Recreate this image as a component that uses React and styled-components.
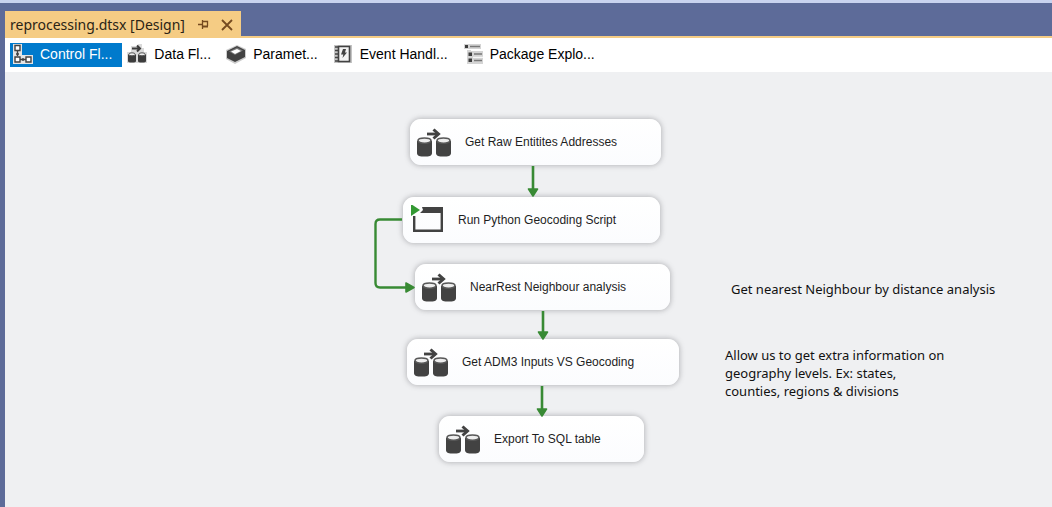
import React from "react";
import styled, { createGlobalStyle } from "styled-components";

const GlobalStyle = createGlobalStyle`
  * { box-sizing: border-box; }
  body { margin: 0; background: #eff0f2; font-family: "Liberation Sans", Arial, sans-serif; }
`;

const Window = styled.div`
  display: flex;
  flex-direction: column;
  min-height: 100vh;
  border-top: 3px solid #c9d3ef;
  background: #5d6b99;
`;

const TabStrip = styled.div`
  display: flex;
  padding: 8px 0 0 5px;
`;

const DocumentTab = styled.div`
  display: flex;
  align-items: center;
  height: 25px;
  padding: 2px 8px 0 5px;
  background: #f5cc84;
  color: #2b2415;
  font: 14px/20px "Noto Sans", "Segoe UI", sans-serif;
  white-space: nowrap;
`;

const TabTitle = styled.span`
  width: 188px;
`;

const TabButton = styled.button`
  display: flex;
  padding: 0;
  margin-right: ${(p) => p.$gap || 0}px;
  border: 0;
  background: none;
  color: #754a20;
`;

const Panel = styled.main`
  display: flex;
  flex-direction: column;
  flex: 1;
  margin-left: 5px;
  background: #eff0f2;
`;

const Toolbar = styled.nav`
  display: flex;
  align-items: center;
  gap: 2px;
  height: 36px;
  padding: 0 5px;
  border-top: 2px solid #f5cc84;
  background: #fff;
`;

const ViewButton = styled.button`
  display: flex;
  align-items: center;
  gap: 7px;
  height: 24px;
  padding: 0 10px 2px 3px;
  border: 0;
  background: ${(p) => (p.$active ? "#007acc" : "transparent")};
  color: ${(p) => (p.$active ? "#fff" : "#000")};
  font: 14px/20px "Liberation Sans", Arial, sans-serif;
  white-space: nowrap;
`;

const Canvas = styled.section`
  position: relative;
  flex: 1;
  overflow: hidden;
`;

const Connectors = styled.svg`
  position: absolute;
  left: 0;
  top: 0;
  overflow: visible;
`;

const Task = styled.div`
  position: absolute;
  left: ${(p) => p.$x}px;
  top: ${(p) => p.$y}px;
  width: ${(p) => p.$w}px;
  height: 46px;
  display: flex;
  align-items: center;
  gap: 12px;
  padding-left: 7px;
  border-radius: 11px;
  background: linear-gradient(#fff, #fbfcfe);
  box-shadow: 0 0 5px 1px rgba(90, 90, 95, 0.35);
  color: #1e1e1e;
  font-size: 12px;
  line-height: 16px;
  white-space: nowrap;
`;

const Annotation = styled.p`
  position: absolute;
  left: ${(p) => p.$x}px;
  top: ${(p) => p.$y}px;
  margin: 0;
  color: #111;
  font: 13px/18px "Noto Sans", "Segoe UI", sans-serif;
  white-space: pre-line;
`;

const PinIcon = () => (
  <svg width="11" height="9" viewBox="0 0 11 9" fill="none" stroke="currentColor" aria-hidden="true">
    <path d="M0 4.5H4M4.5 0V9M4.5 1.5H9.5V6" strokeWidth="1.3" />
    <path d="M4 6.5H10" strokeWidth="2" />
  </svg>
);

const CloseIcon = () => (
  <svg width="12" height="12" viewBox="0 0 12 12" fill="none" stroke="currentColor" strokeWidth="1.8" aria-hidden="true">
    <path d="M1 1L11 11M11 1L1 11" />
  </svg>
);

const DataFlowIcon = () => (
  <svg width="36" height="30" viewBox="0 0 36 30" aria-hidden="true">
    {[0, 19].map((x) => (
      <g key={x} transform={`translate(${x} 0)`}>
        <path d="M0 14V26C0 29 3 29.5 7.5 29.5S15 29 15 26V14Z" fill="#424242" />
        <ellipse cx="7.5" cy="13.6" rx="6.5" ry="2.6" fill="#ededed" stroke="#585858" strokeWidth="1.6" />
      </g>
    ))}
    <path d="M10 7H21" stroke="#424242" strokeWidth="2.8" fill="none" />
    <path d="M16.5 2.5L21.5 7L16.5 11.5" stroke="#424242" strokeWidth="3" fill="none" />
  </svg>
);

const SmallDataFlowIcon = () => (
  <svg width="20" height="20" viewBox="0 0 20 20" aria-hidden="true">
    <path d="M4 2H11V0H15V4H17V8H20V19H0V8H4Z" fill="#dadada" />
    {[1, 11].map((x) => (
      <g key={x} transform={`translate(${x} 0)`}>
        <path d="M0 10.5V17Q0 18.5 4 18.5T8 17V10.5Z" fill="#3c3c3c" />
        <ellipse cx="4" cy="10.3" rx="3.2" ry="1.5" fill="#f0f0f0" stroke="#555" />
      </g>
    ))}
    <path d="M5 4.5H12M10 1.5L13 4.5L10 7.5" stroke="#3c3c3c" strokeWidth="2" fill="none" />
  </svg>
);

const ScriptIcon = () => (
  <svg width="36" height="30" viewBox="0 0 36 30" aria-hidden="true">
    <path d="M12 2H33V27H3V11H5.4V24.6H30.6V8H10L13 5Z" fill="#424242" />
    <path d="M1-1V11L10 5Z" fill="#339933" />
  </svg>
);

const ControlFlowIcon = () => (
  <svg width="20" height="20" viewBox="0 0 20 20" aria-hidden="true">
    <path d="M0 0H9V11H20V20H0Z" fill="#e4e4e4" />
    <g fill="#fff" stroke="#424242" strokeWidth="1.4">
      <path d="M2 1.5H7V6.5H2ZM2 13H7V18H2ZM13 13H18V18H13Z" />
      <path d="M4.5 7V12M3 10H6M7 15.5H13M10 14V17" fill="none" />
    </g>
  </svg>
);

const ParametersIcon = () => (
  <svg width="20" height="20" viewBox="0 0 20 20" aria-hidden="true">
    <path d="M0 6L11 1L20 5V14L9 20L0 15Z" fill="#ccc" />
    <path d="M1 7L11 2L19 6V13L9 18L1 14Z" fill="#424242" />
    <path d="M3 7.5L11 3.5L17 6.5L9 11Z" fill="#777" />
    <path d="M5 7.6L11 5L15 7L9 10Z" fill="#fff" />
  </svg>
);

const EventIcon = () => (
  <svg width="20" height="20" viewBox="0 0 20 20" aria-hidden="true">
    <path d="M1 1H19V19H1Z" fill="#c4c4c4" />
    <path d="M5.5 2.5H16.5V17.5H5.5Z" fill="#f2f2f2" stroke="#424242" strokeWidth="1.6" />
    <path d="M2 3H5M2 6.5H5M2 10H5M2 13.5H5M2 17H5" stroke="#424242" strokeWidth="1.4" />
    <path d="M10 5H13L12 8.5H14L9.5 14L10.3 10.5H8Z" fill="#424242" />
  </svg>
);

const PackageIcon = () => (
  <svg width="20" height="20" viewBox="0 0 20 20" aria-hidden="true">
    <path d="M1 0H18V5H8V7H20V20H4V5H1Z" fill="#d4d4d4" />
    <path d="M2 1H5V4H2ZM5.5 8.5H9V12H5.5ZM5.5 14.5H9V18H5.5Z" fill="#3d3d3d" />
    <path d="M7 2.5H17M11 10H19M11 16.5H19" stroke="#777" strokeWidth="1.6" />
    <path d="M4 5.5H8M10 13.3H20" stroke="#fff" />
  </svg>
);

const VIEWS = [
  { label: "Control Fl...", icon: <ControlFlowIcon />, active: true },
  { label: "Data Fl...", icon: <SmallDataFlowIcon /> },
  { label: "Paramet...", icon: <ParametersIcon /> },
  { label: "Event Handl...", icon: <EventIcon /> },
  { label: "Package Explo...", icon: <PackageIcon /> },
];

const TASKS = [
  { label: "Get Raw Entitites Addresses", x: 405, y: 47, w: 251 },
  { label: "Run Python Geocoding Script", x: 398, y: 125, w: 257, script: true },
  { label: "NearRest Neighbour analysis", x: 410, y: 192, w: 255 },
  { label: "Get ADM3 Inputs VS Geocoding", x: 402, y: 267, w: 272 },
  { label: "Export To SQL table", x: 434, y: 344, w: 205 },
];

const DOWN_LINKS = [
  { x: 528, from: 94, to: 125 },
  { x: 538, from: 239, to: 268 },
  { x: 537, from: 314, to: 345 },
];

export default function App() {
  return (
    <Window>
      <GlobalStyle />
      <TabStrip>
        <DocumentTab>
          <TabTitle>reprocessing.dtsx [Design]</TabTitle>
          <TabButton aria-label="Pin tab" $gap={12}><PinIcon /></TabButton>
          <TabButton aria-label="Close tab"><CloseIcon /></TabButton>
        </DocumentTab>
      </TabStrip>
      <Panel>
        <Toolbar>
          {VIEWS.map((v) => (
            <ViewButton key={v.label} $active={v.active}>
              {v.icon}
              <span>{v.label}</span>
            </ViewButton>
          ))}
        </Toolbar>
        <Canvas>
          {TASKS.map((t) => (
            <Task key={t.label} $x={t.x} $y={t.y} $w={t.w}>
              {t.script ? <ScriptIcon /> : <DataFlowIcon />}
              <span>{t.label}</span>
            </Task>
          ))}
          <Connectors width="700" height="400" aria-hidden="true">
            <g fill="#388a34" stroke="#388a34" strokeLinejoin="round">
              {DOWN_LINKS.map((l) => (
                <g key={l.x}>
                  <path d={`M${l.x} ${l.from}V${l.to - 8}`} strokeWidth="2.6" />
                  <path d={`M${l.x - 4.5} ${l.to - 8}H${l.x + 4.5}L${l.x} ${l.to - 1}Z`} strokeWidth="1.6" />
                </g>
              ))}
              <path d="M397 147.5H375Q370.5 147.5 370.5 152V211Q370.5 215.5 375 215.5H402" fill="none" strokeWidth="2.4" />
              <path d="M401 211V220L409 215.5Z" strokeWidth="1.6" />
            </g>
          </Connectors>
          <Annotation $x={726} $y={208}>Get nearest Neighbour by distance analysis</Annotation>
          <Annotation $x={720} $y={274}>
            {"Allow us to get extra information on\ngeography levels. Ex: states,\ncounties, regions & divisions"}
          </Annotation>
        </Canvas>
      </Panel>
    </Window>
  );
}
